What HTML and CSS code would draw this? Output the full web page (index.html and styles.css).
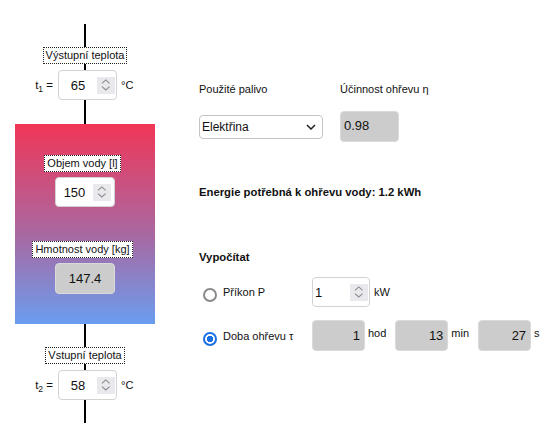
FILE: index.html
```html
<!DOCTYPE html>
<html lang="cs">
<head>
<meta charset="utf-8">
<title>Ohřev vody</title>
<link rel="stylesheet" href="styles.css">
</head>
<body>
<div class="page">
  <div class="pipe">
    <div class="seg seg-top"></div>
    <div class="cap">Výstupní teplota</div>
    <div class="trow">
      <span class="tlabel">t<sub>1</sub> =</span>
      <div class="num">
        <span class="num-val">65</span>
        <span class="spin"><svg width="18" height="17" viewBox="0 0 18 17"><path d="M5 6.3 L8.8 2.9 L12.6 6.3 M5 9.6 L8.8 13 L12.6 9.6" fill="none" stroke="#8c8c8c" stroke-width="1.1"/></svg></span>
      </div>
      <span class="unit">°C</span>
    </div>
    <div class="seg seg-mid1"></div>
    <div class="tank">
      <div class="cap cap-in">Objem vody [l]</div>
      <div class="num num-tank">
        <span class="num-val">150</span>
        <span class="spin"><svg width="18" height="17" viewBox="0 0 18 17"><path d="M5 6.3 L8.8 2.9 L12.6 6.3 M5 9.6 L8.8 13 L12.6 9.6" fill="none" stroke="#8c8c8c" stroke-width="1.1"/></svg></span>
      </div>
      <div class="cap cap-in cap-mass">Hmotnost vody [kg]</div>
      <div class="ro ro-mass">147.4</div>
    </div>
    <div class="seg seg-mid2"></div>
    <div class="cap">Vstupní teplota</div>
    <div class="trow">
      <span class="tlabel">t<sub>2</sub> =</span>
      <div class="num">
        <span class="num-val">58</span>
        <span class="spin"><svg width="18" height="17" viewBox="0 0 18 17"><path d="M5 6.3 L8.8 2.9 L12.6 6.3 M5 9.6 L8.8 13 L12.6 9.6" fill="none" stroke="#8c8c8c" stroke-width="1.1"/></svg></span>
      </div>
      <span class="unit">°C</span>
    </div>
    <div class="seg seg-bot"></div>
  </div>

  <div class="panel">
    <div class="fuel">
      <div class="flabel">Použité palivo</div>
      <div class="flabel">Účinnost ohřevu η</div>
      <div class="select">
        <span class="select-val">Elektřina</span>
        <svg width="10" height="6" viewBox="0 0 10 6"><path d="M1 1 L5 5 L9 1" fill="none" stroke="#222" stroke-width="1.5"/></svg>
      </div>
      <div class="ro ro-eff">0.98</div>
    </div>

    <div class="energy">Energie potřebná k ohřevu vody: 1.2 kWh</div>

    <div class="calc">Vypočítat</div>

    <div class="row row-p">
      <div class="opt">
        <span class="radio"></span>
        <span class="opt-label">Příkon P</span>
      </div>
      <div class="num num-p">
        <span class="num-val">1</span>
        <span class="spin"><svg width="18" height="17" viewBox="0 0 18 17"><path d="M5 6.3 L8.8 2.9 L12.6 6.3 M5 9.6 L8.8 13 L12.6 9.6" fill="none" stroke="#8c8c8c" stroke-width="1.1"/></svg></span>
      </div>
      <span class="unit unit-kw">kW</span>
    </div>

    <div class="row row-t">
      <div class="opt">
        <span class="radio radio-on"></span>
        <span class="opt-label">Doba ohřevu τ</span>
      </div>
      <div class="times">
        <div class="ro tbox">1</div>
        <span class="tunit">hod</span>
        <div class="ro tbox">13</div>
        <span class="tunit">min</span>
        <div class="ro tbox">27</div>
        <span class="tunit">s</span>
      </div>
    </div>
  </div>
</div>
</body>
</html>
```

FILE: styles.css
```css
html, body {
  margin: 0;
  padding: 0;
  background: #ffffff;
}

body {
  font-family: "Liberation Sans", Arial, sans-serif;
  color: #111;
  font-size: 11px;
}

.page {
  display: flex;
  align-items: flex-start;
  padding: 24px 0 0 15px;
}

/* ---------- left: pipe column ---------- */
.pipe {
  width: 140px;
  display: flex;
  flex-direction: column;
  align-items: center;
  background: linear-gradient(to right, transparent 69px, #000 69px, #000 71px, transparent 71px);
}

.seg { width: 2px; }
.seg-top { height: 23px; }
.seg-mid1 { height: 24px; }
.seg-mid2 { height: 23px; }
.seg-bot { height: 23px; }

.cap {
  background: #fff;
  border: 1px dotted #222;
  padding: 0 2px;
  font-size: 11px;
  line-height: 15px;
  white-space: nowrap;
}

.trow {
  margin-top: 6px;
  width: 140px;
  display: grid;
  grid-template-columns: 43px 59px 38px;
  align-items: center;
}

.tlabel {
  justify-self: end;
  padding-right: 5px;
  font-size: 11.5px;
  background: #fff;
}

.tlabel sub {
  font-size: 8.5px;
  vertical-align: -3px;
  line-height: 0;
}

.unit {
  padding-left: 4px;
  font-size: 11px;
}

.num {
  box-sizing: border-box;
  width: 59px;
  height: 30px;
  display: flex;
  align-items: center;
  background: #fff;
  border: 1px solid #d2d2d2;
  border-radius: 4px;
  padding-right: 1px;
}

.num-val {
  flex: 1;
  text-align: center;
  font-size: 13px;
}

.spin {
  width: 18px;
  height: 17px;
  background: #e9e9ed;
  display: block;
}

.spin svg { display: block; }

.tank {
  width: 140px;
  height: 200px;
  box-sizing: border-box;
  padding-top: 31px;
  display: flex;
  flex-direction: column;
  align-items: center;
  background: linear-gradient(to bottom, #f13657 0%, #a56ba6 58%, #6b9def 100%);
}

.cap-in { margin-right: 5px; }

.num-tank {
  margin-top: 5px;
  width: 60px;
  padding-right: 3px;
}

.cap-mass { margin-top: 34px; }

.ro {
  box-sizing: border-box;
  background: #cccccc;
  border: 1px solid #dadada;
  border-radius: 4px;
  font-size: 13px;
}

.ro-mass {
  margin-top: 5px;
  width: 60px;
  height: 31px;
  line-height: 29px;
  text-align: center;
}

/* ---------- right panel ---------- */
.panel {
  margin-left: 44px;
  margin-top: 58px;
  display: flex;
  flex-direction: column;
}

.fuel {
  display: grid;
  grid-template-columns: 141px auto;
  row-gap: 15px;
  align-items: center;
}

.flabel {
  font-size: 11px;
  line-height: 14px;
}

.select {
  box-sizing: border-box;
  width: 124px;
  height: 24px;
  display: flex;
  align-items: center;
  justify-content: space-between;
  border: 1px solid #c4c4c4;
  border-radius: 4px;
  padding: 0 6px 0 2px;
  background: #fff;
}

.select-val { font-size: 12px; }
.select svg { display: block; }

.ro-eff {
  width: 59px;
  height: 31px;
  padding: 0 0 2px 3px;
  line-height: 27px;
}

.energy {
  margin-top: 43px;
  font-weight: bold;
  font-size: 11.3px;
  line-height: 14px;
}

.calc {
  margin-top: 51px;
  font-weight: bold;
  font-size: 11.3px;
  line-height: 14px;
}

.row {
  display: flex;
  align-items: center;
}

.row-p { margin-top: 13px; }
.row-t { margin-top: 13px; }

.opt {
  width: 113px;
  display: flex;
  align-items: center;
}

.radio {
  box-sizing: border-box;
  width: 14px;
  height: 14px;
  margin: 6px 0 0 4px;
  border: 2px solid #8a8a8a;
  border-radius: 50%;
  background: #fff;
  flex: none;
}

.radio-on {
  border-color: #1b6fe6;
  background: radial-gradient(circle, #1b6fe6 0, #1b6fe6 3px, #fff 3.5px);
}

.opt-label {
  margin-left: 6px;
  font-size: 11px;
  line-height: 14px;
}

.num-p {
  width: 58px;
  padding-left: 2px;
}

.num-p .num-val { text-align: left; }

.unit-kw { padding-left: 4px; }

.times {
  display: flex;
  align-items: center;
}

.tbox {
  width: 53px;
  height: 31px;
  padding: 1px 4px 0 0;
  line-height: 28px;
  text-align: right;
}

.tunit {
  margin: 0 9px 4px 3px;
  font-size: 11px;
  line-height: 13px;
}
```
